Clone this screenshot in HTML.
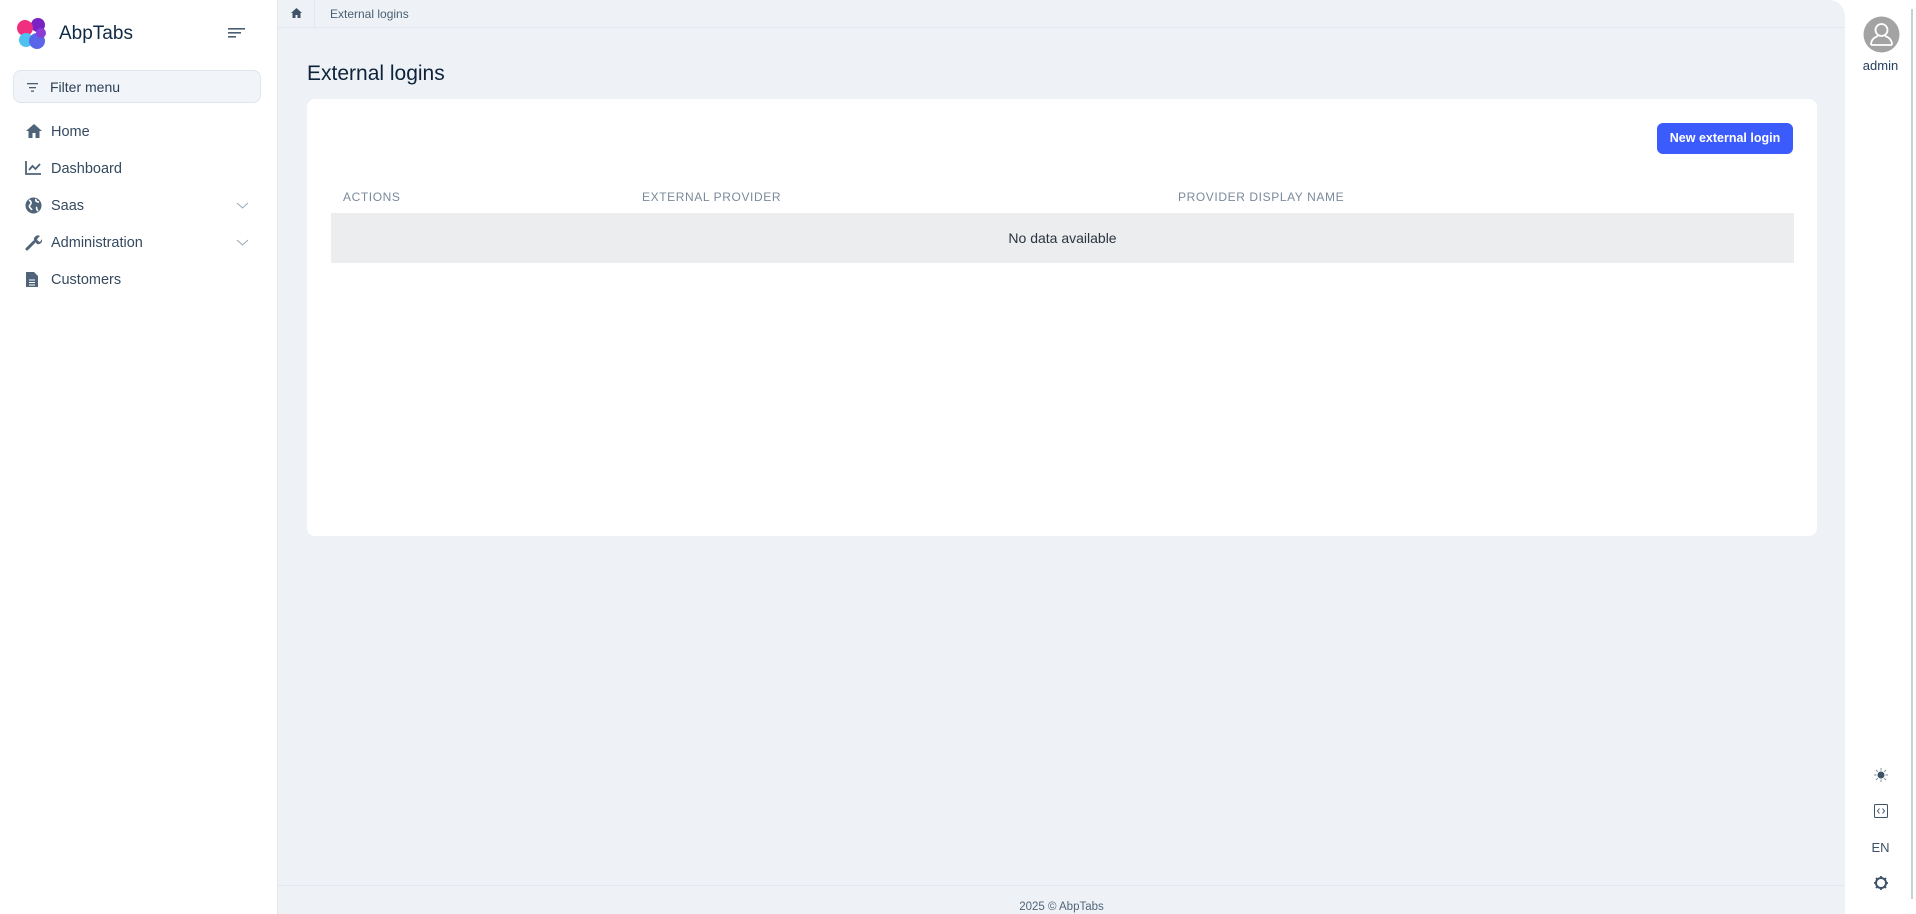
<!DOCTYPE html>
<html><head><meta charset="utf-8"><style>
*{box-sizing:border-box;margin:0;padding:0}
body{width:1916px;height:914px;overflow:hidden;background:#fff;font-family:"Liberation Sans",sans-serif;position:relative;color:#1e3a5f}
.side{position:absolute;left:0;top:0;width:277px;height:914px;background:#fff}
.logo{position:absolute;left:17px;top:17px}
.brand{position:absolute;left:59px;top:23px;font-size:19px;color:#0f2a44}
.ham{position:absolute;left:228px;top:27px}
.filter{position:absolute;left:13px;top:70px;width:248px;height:33px;border:1px solid #dfe5ec;background:#f1f4f8;border-radius:8px;font-size:14px;color:#2b3f55;padding:8px 0 0 36px}
.filter svg{position:absolute;left:13px;top:12px}
.item{position:absolute;left:25px;font-size:14.5px;color:#34495e;height:20px;width:230px}
.item span{position:absolute;left:26px;top:2px}
.item svg.i{position:absolute;left:0;top:1px}
.item svg.c{position:absolute;left:211px;top:6px}
.main{position:absolute;left:277px;top:0;width:1568px;height:914px;background:#eef2f6;border-radius:0 16px 0 0;border-left:1px solid #e3e8ee}
.bc{height:28px;border-bottom:1px solid #e3e8ee;position:relative}
.bc .sep{position:absolute;left:36px;top:0;width:1px;height:28px;background:#e3e8ee}
.bc .t{position:absolute;left:52px;top:7px;font-size:12px;color:#4a5e73}
h1{position:absolute;left:29px;top:62px;font-size:21px;font-weight:normal;color:#0c233b}
.card{position:absolute;left:29px;top:99px;width:1510px;height:437px;background:#fff;border-radius:8px}
.btn{position:absolute;left:1350px;top:24px;width:136px;height:31px;background:#3b5bfd;border-radius:6px;color:#fff;font-size:12.5px;font-weight:bold;text-align:center;line-height:31px}
.th{position:absolute;top:91px;font-size:12px;letter-spacing:.6px;color:#7a8a9b}
.nd{position:absolute;left:24px;top:114px;width:1463px;height:50px;background:#ecedef;text-align:center;line-height:50px;font-size:14px;color:#2a3440}
.foot{position:absolute;left:0;top:885px;width:100%;border-top:1px solid #e3e8ee;text-align:center;font-size:11.5px;color:#52657a;padding-top:15px}
.right{position:absolute;left:1845px;top:0;width:71px;height:914px;background:#fff}
.sb{position:absolute;left:1911px;top:9px;width:2px;height:890px;background:#c9cfd6}
</style></head><body>
<div class="side">
<svg class="logo" width="31" height="32" viewBox="0 0 31 32"><circle cx="21" cy="8" r="7" fill="#7a22c4"/><circle cx="8" cy="11" r="8" fill="#f0307f"/><circle cx="9" cy="23" r="7" fill="#4fc1ee"/><circle cx="20" cy="24" r="8" fill="#5a66e8"/><circle cx="24" cy="16" r="5" fill="#8d3bd6"/></svg>
<div class="brand">AbpTabs</div>
<svg class="ham" width="18" height="12"><rect x="0" y="1" width="17" height="1.6" fill="#4a5e73"/><rect x="0" y="5" width="13" height="1.6" fill="#4a5e73"/><rect x="0" y="9" width="8" height="1.6" fill="#4a5e73"/></svg>
<div class="filter"><svg width="11" height="9"><rect y="0" width="11" height="1.3" fill="#4a5e73"/><rect x="2" y="4" width="7" height="1.3" fill="#4a5e73"/><rect x="4" y="7.5" width="3" height="1.3" fill="#4a5e73"/></svg>Filter menu</div>
<div class="item" style="top:122px"><svg class="i" width="18" height="16" viewBox="0 0 18 16"><path d="M9 1L1 8h2.5v7h4v-5h3v5h4V8H17z" fill="#4f6479"/></svg><span>Home</span></div>
<div class="item" style="top:159px"><svg class="i" width="17" height="15" viewBox="0 0 17 15"><path d="M1 1v13h15" stroke="#4f6479" stroke-width="1.8" fill="none"/><path d="M4 10l3.5-4 3 3L15 4" stroke="#4f6479" stroke-width="1.8" fill="none"/></svg><span>Dashboard</span></div>
<div class="item" style="top:196px"><svg class="i" width="17" height="17" viewBox="0 0 17 17"><circle cx="8.5" cy="8.5" r="8" fill="#4f6479"/><path d="M4 3c2 1 3 3 1 5s1 3 2 5M11 2c-1 2 1 3 3 3M12 10c-1 1 0 3 1 4" stroke="#fff" stroke-width="1.6" fill="none"/></svg><span>Saas</span><svg class="c" width="13" height="7"><path d="M1 1l5.5 5 5.5-5" stroke="#9aa7b5" fill="none"/></svg></div>
<div class="item" style="top:233px"><svg class="i" width="17" height="17" viewBox="0 0 17 17"><path d="M2 15l7-7" stroke="#4f6479" stroke-width="3" stroke-linecap="round"/><path d="M9 6a4 4 0 0 1 6-4l-3 3 1 2 2 1 2-3a4 4 0 0 1-5 5z" fill="#4f6479"/></svg><span>Administration</span><svg class="c" width="13" height="7"><path d="M1 1l5.5 5 5.5-5" stroke="#9aa7b5" fill="none"/></svg></div>
<div class="item" style="top:270px"><svg class="i" width="14" height="17" viewBox="0 0 14 17"><path d="M1 1h8l4 4v11H1z" fill="#4f6479"/><path d="M4 9h6M4 11.5h6M4 14h6" stroke="#fff" stroke-width="1"/></svg><span>Customers</span></div>
</div>
<div class="main">
<div class="bc"><svg style="position:absolute;left:13px;top:8px" width="11" height="10" viewBox="0 0 11 10"><path d="M5.5 0L0 5h1.5v5h3V7h2v3h3V5H11z" fill="#3e5368"/></svg><div class="sep"></div><div class="t">External logins</div></div>
<h1>External logins</h1>
<div class="card">
<div class="btn">New external login</div>
<div class="th" style="left:36px">ACTIONS</div>
<div class="th" style="left:335px">EXTERNAL PROVIDER</div>
<div class="th" style="left:871px">PROVIDER DISPLAY NAME</div>
<div class="nd">No data available</div>
</div>
<div class="foot">2025 © AbpTabs</div>
</div>
<div class="right">
<svg style="position:absolute;left:18px;top:16px" width="37" height="37" viewBox="0 0 37 37"><circle cx="18.5" cy="18.5" r="18" fill="#a3a3a3"/><circle cx="18.5" cy="14" r="6" fill="none" stroke="#fff" stroke-width="1.8"/><path d="M8 29c0-6 4-8 7-9M29 29c0-6-4-8-7-9M8 29h21" fill="none" stroke="#fff" stroke-width="1.8"/></svg>
<div style="position:absolute;left:0;width:71px;top:58px;text-align:center;font-size:13px;color:#25405c">admin</div>
<svg style="position:absolute;left:29px;top:768px" width="14" height="14" viewBox="0 0 14 14"><circle cx="7" cy="7" r="3.5" fill="#3e5368"/><path d="M7 0v2.5M7 11.5V14M0 7h2.5M11.5 7H14M2 2l1.8 1.8M10.2 10.2L12 12M2 12l1.8-1.8M10.2 3.8L12 2" stroke="#7f8fa0" stroke-width="1"/></svg>
<svg style="position:absolute;left:29px;top:804px" width="14" height="14" viewBox="0 0 14 14"><rect x=".5" y=".5" width="13" height="13" rx="1" fill="none" stroke="#3e5368"/><path d="M5.5 4.5L3.5 7l2 2.5M8.5 4.5l2 2.5-2 2.5" fill="none" stroke="#3e5368"/></svg>
<div style="position:absolute;left:0;width:71px;top:840px;text-align:center;font-size:13px;color:#3e5368">EN</div>
<svg style="position:absolute;left:29px;top:876px" width="14" height="14" viewBox="0 0 14 14"><circle cx="7" cy="7" r="5" fill="none" stroke="#3e5368" stroke-width="2"/><path d="M7 0v2M7 12v2M0 7h2M12 7h2M2 2l1.5 1.5M10.5 10.5L12 12M2 12l1.5-1.5M10.5 3.5L12 2" stroke="#3e5368" stroke-width="1.8"/></svg>
</div>
<div class="sb"></div>
</body></html>
